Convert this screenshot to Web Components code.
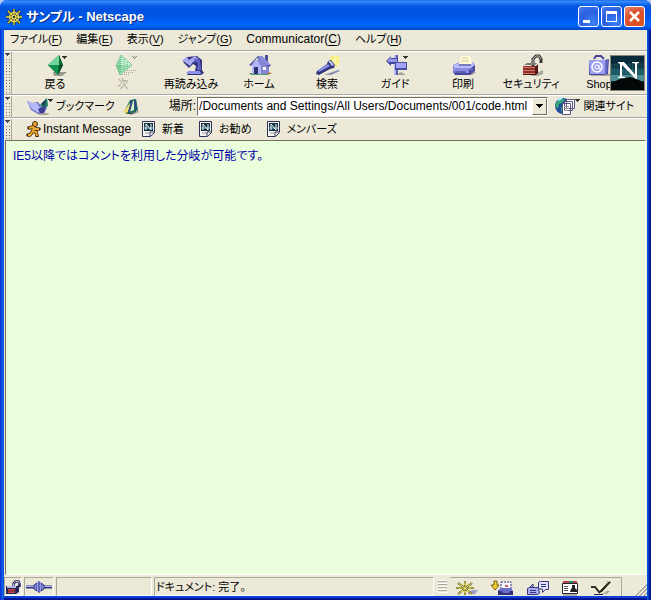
<!DOCTYPE html>
<html lang="ja">
<head>
<meta charset="utf-8">
<title>サンプル - Netscape</title>
<style>
html, body { margin: 0; height: 100%; }
body {
  background: #b4cdf4;
  font: 12px/14px "Liberation Sans", "Noto Sans CJK JP", sans-serif;
  font-feature-settings: "palt";
  color: #000;
  overflow: hidden;
}
</style>
</head>
<body>
<ns-window>
  <ns-title-bar slot="title">サンプル - Netscape</ns-title-bar>
  <ns-menu-bar slot="bars">
    <ns-menu key="F">ファイル</ns-menu>
    <ns-menu key="E">編集</ns-menu>
    <ns-menu key="V">表示</ns-menu>
    <ns-menu key="G">ジャンプ</ns-menu>
    <ns-menu key="C">Communicator</ns-menu>
    <ns-menu key="H">ヘルプ</ns-menu>
  </ns-menu-bar>
  <ns-toolbar slot="bars" kind="navigation">
    <ns-tool icon="back">戻る</ns-tool>
    <ns-tool icon="next" disabled>次</ns-tool>
    <ns-tool icon="reload">再読み込み</ns-tool>
    <ns-tool icon="home">ホーム</ns-tool>
    <ns-tool icon="search">検索</ns-tool>
    <ns-tool icon="guide">ガイド</ns-tool>
    <ns-tool icon="print">印刷</ns-tool>
    <ns-tool icon="security">セキュリティ</ns-tool>
    <ns-tool icon="shop">Shop</ns-tool>
    <ns-icon slot="end" name="netscape"></ns-icon>
  </ns-toolbar>
  <ns-toolbar slot="bars" kind="location">
    <ns-location value="/Documents and Settings/All Users/Documents/001/code.html"></ns-location>
  </ns-toolbar>
  <ns-toolbar slot="bars" kind="personal">
    <ns-link icon="aim">Instant Message</ns-link>
    <ns-link icon="page">新着</ns-link>
    <ns-link icon="page">お勧め</ns-link>
    <ns-link icon="page">メンバーズ</ns-link>
  </ns-toolbar>
  <ns-page>IE5以降ではコメントを利用した分岐が可能です。</ns-page>
  <ns-status-bar slot="status">ドキュメント: 完了。</ns-status-bar>
</ns-window>

<script>
const define = (name, markup, setup) => {
  const template = document.createElement('template');
  template.innerHTML = markup;
  customElements.define(name, class extends HTMLElement {
    constructor() {
      super();
      this.attachShadow({ mode: 'open' }).append(template.content.cloneNode(true));
    }
    connectedCallback() { if (setup) setup(this, this.shadowRoot); }
  });
};

const makeIcon = (name) => {
  const icon = document.createElement('ns-icon');
  icon.setAttribute('name', name);
  return icon;
};

const drop = (x, y) => `<path d="M${x} ${y}h5v1h-1v1h-1v1h-1v-1h-1v-1h-1z" fill="#333"/>`;

/* name: [width, height, drawing] */
const ICONS = {
  helm: [16, 16, `<g stroke="#26240c" stroke-width="3"><path d="M8 0v16M0 8h16M2 2l12 12M14 2L2 14"/></g>
    <g stroke="#e9dc5c" stroke-width="1.3" fill="none"><path d="M8 0v16M0 8h16M2 2l12 12M14 2L2 14"/><circle cx="8" cy="8" r="4.5"/></g><path d="M7 7h2v2H7z" fill="#333"/>`],
  back: [32, 24, `<path d="M14 19h14l-5 4h-8z" fill="#9a978d"/><path d="M9 12L20 2l4 10-5 10z" fill="#087238"/><path d="M9 12L20 2v10z" fill="#6fd59a"/><path d="M9 12h11l-1 10z" fill="#12914d"/><path d="M20 2l4 10h-4z" fill="#0a6b35"/><path d="M20 12h4l-5 10z" fill="#044d28"/>${drop(23, 3)}`],
  next: [32, 24, `<path d="M13 21.500h10M17 19.500h10M20 17.500h9" stroke="#aaa79d" stroke-dasharray="1 1" fill="none"/><path d="M14 2l11 10-12 10-4-10z" fill="#9fe0b5"/><path d="M14 2l11 10H14z" fill="#c3f3d0"/><path d="M9 12h5l-1 10z" fill="#7fcf9c"/><path d="M14 2l11 10-12 10-4-10zM14 4v16M17 6v11M20 9v6M12 8v8" stroke="#4fae73" stroke-dasharray="1 1" fill="none"/><path d="M25 3.500h5M26 4.500h3M27 5.500h1" stroke="#888" stroke-dasharray="1 1"/>`],
  reload: [32, 24, `<path d="M11 19h18l-5 3H14z" fill="#aaa79d"/><path d="M12 4l10-1 5 4v10l2 3-3 2H12l2-4h6l1-5-3-2-4 4-6-6z" fill="#34337f"/><path d="M7 7l5-3 2 3 6-4 4 3-6 3-3 4z" fill="#a8abf4"/><path d="M20 5l5 2 1 10h-4l1-7-4-2z" fill="#6163c2"/><path d="M13 18h12l1 3H12z" fill="#8f92ea"/>`],
  home: [32, 24, `<path d="M6 20h22l-3 2H8z" fill="#4e9a64"/><path d="M22 2h3v10h-3z" fill="#4c4c9d"/><path d="M9 12l9-9 8 10v8H9z" fill="#8585d6"/><path d="M9 12l5-5 4 6v8H9z" fill="#b1b5fa"/><path d="M6 12l9-9 4 0 9 10-3 1-7-8-4-1-6 8z" fill="#55559f"/><path d="M15 3h4l9 9h-5z" fill="#8b8de2"/><path d="M11 14h4v7h-4z" fill="#303071"/><path d="M20 14h3v3h-3z" fill="#fff"/><path d="M26 19l3 2h-5z" fill="#cc6b39"/>`],
  search: [32, 24, `<path d="M20 3h8v9l-6 2-4-5z" fill="#f6ee7c"/><path d="M18 3l9 9M24 2l-1 12M29 5l-8 5" stroke="#fffcbd"/><path d="M13 22l14-5 2 1-9 4z" fill="#8f8db2"/><path d="M6 18l10-7 1-3 3-1 4 5-1 3-4 1-11 6-3-1z" fill="#34347c"/><path d="M7 17l10-6 2 2-11 6z" fill="#8f93e7"/><path d="M17 8l3 0 3 4-2 1z" fill="#bfc3ff"/>`],
  guide: [32, 24, `<path d="M17 22h10l-5-3z" fill="#a5a29b"/><path d="M15 2h4v20h-4z" fill="#5c5dae"/><path d="M15 2h2v20h-2z" fill="#b3b6fb"/><path d="M7 8l5-5v2h7v6h-7v2z" fill="#4546a0"/><path d="M8 8l4-4v2h6v3h-8z" fill="#9497e8"/><path d="M16 9h12v8H16z" fill="#4a4b9e"/><path d="M17 10h10v5H17z" fill="#a0a4f2"/>${drop(24, 3)}`],
  print: [32, 24, `<path d="M22 19h7l-4 3h-8z" fill="#aaa79d"/><path d="M6 12l7-3h13l2 3v6l-5 4H8l-2-3z" fill="#4848a0"/><path d="M6 12l7-3h13l2 3-5 4H7z" fill="#b8bbfa"/><path d="M6 15h16v5H8l-2-2z" fill="#898ce1"/><path d="M12 11l2-8h9l2 8z" fill="#fffbd5"/><path d="M15 5h6M14 8h8" stroke="#ccc596"/><path d="M12 12h12M8 19h11" stroke="#383882"/><path d="M23 15h3v3h-3z" fill="#6263bd"/>`],
  security: [32, 24, `<path d="M19 21l9-4v4l-5 2h-8z" fill="#aaa79d"/><path d="M18 13V6l3-3h3l2 3v4" fill="none" stroke="#3c3a38" stroke-width="3"/><path d="M18 12V6l3-3h3l2 3" fill="none" stroke="#bbb" /><path d="M8 13h13l2-2v9l-2 2H8z" fill="#501714"/><path d="M8 13h12v8H8z" fill="#8f2f28"/><path d="M8 14.500h12M8 17.500h12M8 20.500h12" stroke="#d0756a"/><path d="M9 12l3-2h10l-2 2z" fill="#777"/>`],
  shop: [32, 24, `<path d="M8 22h19l2-3" stroke="#aaa79d" stroke-width="2" fill="none"/><path d="M11 6l2-3h5l3 3" fill="none" stroke="#4545a1" stroke-width="2"/><path d="M6 7h17l3-1-1 15-4 1H6z" fill="#4c4ca5"/><path d="M6 7h16v14H7z" fill="#9ca0f1"/><path d="M22 7l3-1-1 14-2 1z" fill="#6668c2"/><circle cx="14" cy="14" r="5" fill="none" stroke="#fff" stroke-width="1.5"/><circle cx="14" cy="14" r="2" fill="none" stroke="#fff"/><path d="M16 12v4h2" fill="none" stroke="#fff"/>`],
  netscape: [35, 36, `<path d="M0 0h35v36H0z" fill="#86847b"/><path d="M1 1h33v34H1z" fill="#092b39"/><path d="M1 8h33v6H1z" fill="#0e3a48"/><path d="M1 14h33v6H1z" fill="#1c5a66"/><path d="M1 20h33v6H1z" fill="#4c8f92"/><path d="M1 10h33M1 16h33M1 13h33" stroke="#2d7076" stroke-dasharray="1 2"/><path d="M1 28l9-4 10-2 9 3 5 3v7H1z" fill="#020708"/><path d="M8 7h6l11 12.500V8.500L22 8V7h7v1l-2 .5V24h-1L12 10v11.500l3 .5v1H8v-1l2-.5V9L8 8z" fill="#fff"/>`],
  bookmark: [28, 20, `<path d="M11 17h13l-3 2h-8z" fill="#aaa79d"/><path d="M1 5l5 2 6-1 3 4 4-2 2 4-3 5-6 1-7-4z" fill="#7377c6"/><path d="M1 5l5 2 5 0 3 5-1 5-7-4z" fill="#b5b9fb"/><path d="M14 9l7-7 1 8-4 2z" fill="#158263"/><path d="M15 8l5-5-1 7z" fill="#28375e"/><path d="M12 13l8-3-2 7h-4z" fill="#383d8e"/>${drop(22, 3)}`],
  quickfile: [16, 18, `<path d="M9 16l6-3 1 2-4 2z" fill="#aaa79d"/><path d="M1 15L7 3l6-1 2 11-8 4z" fill="#16735a"/><path d="M6 15l3-11 2 0 0 9z" fill="#e4f0c1"/><path d="M0 15l7-9 1 1-4 10z" fill="#edde71"/><path d="M9 4l-3 11M12 3l1 10" stroke="#2f4a85" stroke-width="2"/><path d="M3 16l6 1 4-3" fill="none" stroke="#333"/>`],
  related: [26, 20, `<circle cx="9" cy="10" r="8" fill="#204e9a"/><path d="M3 5l4-3 4 1-3 4-3 1-1 5-3-3zM7 11l4 1-1 5-3-2z" fill="#34a47c"/><path d="M4 4l4-2" stroke="#a7e9ff" stroke-width="2"/><g stroke="#555580"><path d="M12.500 3.500h8v9h-8zM10.500 5.500h8v9h-8zM8.500 7.500h8v11h-8z" fill="#fff"/></g><path d="M10 10.500h5M10 12.500h5M10 14.500h4" stroke="#999"/>${drop(21, 3)}`],
  aim: [16, 16, `<g fill="none" stroke="#3b270d" stroke-linecap="round" stroke-linejoin="round"><path d="M8 6L7 10l3 1 1 4M7 10l-3 4H2M3 7l4-1 3 2h3" stroke-width="3.500"/></g><circle cx="9" cy="3" r="2.500" fill="#f0a928" stroke="#3b270d"/><path d="M8 6L7 10l3 1 1 4M7 10l-3 4H2M3 7l4-1 3 2h3" fill="none" stroke="#f0a928" stroke-width="2"/>`],
  page: [14, 16, `<path d="M.5.5h12v11l-4 4h-8z" fill="#f5f5f5" stroke="#303057"/><path d="M12 11H8v4" fill="none" stroke="#303057"/><path d="M2 2h9v8H2z" fill="#15333f"/><path d="M2 6h9v2H2z" fill="#457c91"/><path d="M4 9V3l5 6V3" fill="none" stroke="#fff"/><path d="M3 12h4" stroke="#999"/>`],
  lock: [16, 16, `<path d="M8.500 8V4.500l2-2h3l1 2V8" fill="none" stroke="#282859" stroke-width="2.500"/><path d="M8.500 7V4.500l2-2h3l1 2" fill="none" stroke="#b9bbea"/><path d="M1 7h11l2-1v7l-3 2H1z" fill="#25255d"/><path d="M2 7h9v2H2z" fill="#b8b8dc"/><path d="M3 10h7v4H3z" fill="#c34a48"/><path d="M3 12h7" stroke="#6c1d27"/>`],
  plug: [28, 14, `<path d="M1 7h9M18 7h9" stroke="#32327c" stroke-width="3"/><path d="M1 6.500h9M18 6.500h9" stroke="#b0b6f8"/><path d="M9 5l3-2v8l-3-2zM16 3l3 2v4l-3 2z" fill="#8a91e4" stroke="#30307a"/><path d="M12 2h4v10h-4z" fill="#9aa0f1"/><path d="M14 1v12" stroke="#30307a"/>`],
  wheel: [24, 16, `<path d="M12 14h8l3-4h-6z" fill="#9da0ca"/><g stroke="#45421c" stroke-width="2"><path d="M10 1v14M1 8h18M3 3l14 11M17 3L3 14"/></g><g stroke="#eee36a" fill="none"><path d="M10 1v14M1 8h18M3 3l14 11M17 3L3 14"/><ellipse cx="10" cy="8" rx="5" ry="4"/></g>`],
  inbox: [24, 16, `<path d="M4 1h3v4h2l-4 5-4-5h3z" fill="#f5d02f" stroke="#765f0f"/><path d="M11 2h10v10H11z" fill="#f8f7ff" stroke="#35356f" stroke-dasharray="2 1"/><path d="M15 5h3v2h-3z" fill="#c96464"/><path d="M8 10l4-2h9l2 3v4H8z" fill="#6a6fca"/><path d="M8 11h4l1 2h6l1-2h3v4H8z" fill="#32327c"/>`],
  chat: [24, 16, `<path d="M12.500 2.500l2-1h8v8h-3l-3 3V9h-4z" fill="#e0e2ff" stroke="#36367c"/><path d="M15 4.500h5M15 6.500h5" stroke="#36367c"/><path d="M1.500 8.500l2-1h9l1 6-2 1h-10zM4 7l3-3v4" fill="#a8acf1" stroke="#36367c"/><path d="M4 10.500h6M4 12.500h6" stroke="#36367c"/>`],
  contact: [18, 16, `<path d="M2 1h14v3H2z" fill="#bb4444"/><path d="M8 1h4v2H8z" fill="#238963"/><path d="M1.500 3.500h15v10h-15z" fill="#fff" stroke="#242431" stroke-width="1"/><path d="M3 6.500h4M3 8.500h4M3 10.500h4" stroke="#555"/><path d="M9 12l1-3 1-1V5h3v3l2 2v2z" fill="#222"/><path d="M2 15h14" stroke="#76746d"/>`],
  composer: [22, 16, `<path d="M7 14h10l3-3h-5z" fill="#aaa79d"/><path d="M2 7l10 0 4 5-8 3z" fill="#f9f8d6"/><path d="M1 7l4 0 5 6" fill="none" stroke="#333" stroke-width="2"/><path d="M8 13L18 1l3 1-9 10z" fill="#23231f"/><path d="M11 9l8-8" stroke="#e8e2b0" stroke-width="1"/><path d="M4 14.500h9" stroke="#272767"/>`],
  minimize: [19, 19, `<path d="M4 13h7v3H4z" fill="#fff"/>`],
  maximize: [19, 19, `<path d="M4 4h11v11H4zM5 7v7h9V7z" fill="#fff" fill-rule="evenodd"/>`],
  close: [19, 19, `<path d="M5 5l9 9M14 5l-9 9" stroke="#fff" stroke-width="2.500"/>`],
  resize: [14, 14, `<path d="M2 14L14 2M6 14l8-8M10 14l4-4" stroke="#aaa798" stroke-width="2"/><path d="M1 14L14 1M5 14l9-9M9 14l5-5" stroke="#fff"/>`],
  arrow: [7, 4, `<path d="M0 0h7v1H6v1H5v1H4v1H3V3H2V2H1V1H0z" fill="#000"/>`]
};

define('ns-icon', `<style>:host{display:block;flex:none}svg{display:block}</style><svg aria-hidden="true"></svg>`, (host, root) => {
  const [w, h, art] = ICONS[host.getAttribute('name')];
  const svg = root.querySelector('svg');
  svg.setAttribute('viewBox', `0 0 ${w} ${h}`);
  svg.setAttribute('width', w);
  svg.setAttribute('height', h);
  svg.innerHTML = art;
});

define('ns-window', `<style>
  :host{display:flex;flex-direction:column;box-sizing:border-box;height:100vh;padding:0 4px 4px;border-radius:7px 7px 0 0;overflow:hidden;
    background:linear-gradient(90deg,#0831d9 0 1px,#166aee 2px,#0855dd 3px,#0855dd calc(100% - 4px),#0855dd calc(100% - 3px),#001ea0 calc(100% - 2px),#00138c)}
  .title{margin:0 -4px}
  main{flex:1;min-height:0;display:flex;background:#ece9d8}
  .foot{box-shadow:0 2px #0b41d8,0 4px #00138c}
</style><div class="title"><slot name="title"></slot></div><slot name="bars"></slot><main><slot></slot></main><div class="foot"><slot name="status"></slot></div>`);

define('ns-title-bar', `<style>
  :host{display:flex;align-items:center;height:30px;padding:3px 6px 0 6px;box-sizing:border-box;gap:4px;color:#fff;
    background:linear-gradient(#0e58d8 0,#3b91ff 1px,#2478f5 3px,#0459e4 6px,#0052df 10px,#0058ea 18px,#0066ff 24px,#0061f8 27px,#0040bf 30px)}
  h1{flex:1;margin:0;font-size:13px;line-height:16px;font-weight:700;text-shadow:1px 1px #0a2a80}
  .buttons{display:flex;gap:2px}
  button{padding:0;width:21px;height:21px;border:1px solid #fff;border-radius:3px;overflow:hidden;background:radial-gradient(circle at 70% 80%,#3b83f4,#2a5fe0 55%,#4a7eee)}
  button.close{background:radial-gradient(circle at 70% 80%,#e0531f,#d9512f 55%,#ee9277)}
</style><ns-icon name="helm"></ns-icon><h1><slot></slot></h1><div class="buttons">
<button aria-label="最小化"><ns-icon name="minimize"></ns-icon></button><button aria-label="最大化"><ns-icon name="maximize"></ns-icon></button><button class="close" aria-label="閉じる"><ns-icon name="close"></ns-icon></button></div>`);

define('ns-menu-bar', `<style>:host{display:flex;align-items:center;gap:14px;height:20px;padding:0 6px;box-sizing:border-box;padding-bottom:2px;background:#ece9d8}</style><slot></slot>`);

define('ns-menu', `<style>:host{display:block}button{font:inherit;font-size:11px;font-feature-settings:inherit;color:inherit;border:0;background:none;padding:0;white-space:nowrap}:host([key=C]) button{font-size:12px}u{text-underline-offset:2px}</style><button><slot></slot>(<u></u>)</button>`, (host, root) => {
  root.querySelector('u').textContent = host.getAttribute('key');
});

define('ns-toolbar', `<style>
  :host{display:flex;background:#ece9d8;border-top:1px solid #aca899;box-shadow:inset 0 1px #fff;overflow:hidden}
  .grip{flex:none;width:8px;border:0;border-right:1px solid #aca899;padding:0;margin-top:1px;
    background:repeating-linear-gradient(#ece9d8 0 2px,transparent 2px 3px) 0 2px,repeating-linear-gradient(90deg,#ece9d8 0 2px,#77746a 2px 3px);display:flex;align-items:flex-start}
  .grip::before{content:"";width:7px;height:6px;background:linear-gradient(#445 0 0) 1px 1px/5px 1px no-repeat,linear-gradient(#445 0 0) 2px 2px/3px 1px no-repeat,linear-gradient(#445 0 0) 3px 3px/1px 1px no-repeat,#ece9d8}
  .items{flex:1;min-width:0;display:flex;overflow:hidden;align-items:center}
  :host([kind=navigation]){height:43px}
  :host([kind=navigation]) .items{padding-left:9px;align-items:flex-start}
  :host([kind=location]){height:22px}
  :host([kind=personal]){height:22px}
  :host([kind=personal]) .items{padding-left:14px;gap:15px;font-size:11px}
  .end{flex:none;display:flex;align-items:center;padding-right:2px}
  :host(:not([kind=navigation])) .end{display:none}
</style><button class="grip" aria-label="ツールバーを折りたたむ"></button><div class="items"><slot></slot></div><div class="end"><slot name="end"></slot></div>`);

define('ns-tool', `<style>
  :host{display:block;flex:0 0 68px}
  button{font:inherit;font-size:11px;font-feature-settings:inherit;color:inherit;width:100%;border:0;background:none;padding:2px 0 0;display:flex;flex-direction:column;align-items:center;white-space:nowrap}
  button:disabled{color:#aca899}
</style><button><span><slot></slot></span></button>`, (host, root) => {
  const button = root.querySelector('button');
  button.prepend(makeIcon(host.getAttribute('icon')));
  button.disabled = host.hasAttribute('disabled');
});

define('ns-link', `<style>
  :host{display:block;font-size:11px}
  a{display:flex;align-items:center;gap:6px;color:inherit;text-decoration:none;white-space:nowrap}
  :host([icon=aim]) a{gap:1px}
  :host([icon=aim]){font-size:12px;margin-right:-4px}
</style><a href="#"><span><slot></slot></span></a>`, (host, root) => {
  root.querySelector('a').prepend(makeIcon(host.getAttribute('icon')));
});

define('ns-location', `<style>
  :host{flex:1;min-width:0;display:flex;align-items:center;padding:0 13px 0 14px;white-space:nowrap}
  button{font:inherit;font-feature-settings:inherit;color:inherit;border:0;background:none;padding:0;display:flex;align-items:center;flex:none}
  .mark{font-size:11px;gap:2px}
  .quick{margin:0 30px 0 8px}
  .combo{flex:1;min-width:0;display:flex;height:19px;box-sizing:border-box;margin:0 6px 0 1px;border:1px solid;border-color:#716f64 #fff #fff #716f64;background:#fff}
  input{flex:1;min-width:0;border:0;outline:0;padding:0 0 0 1px;font:inherit;background:#fff;color:#000}
  .combo button{width:15px;box-sizing:border-box;justify-content:center;background:#ece9d8;border:1px solid;border-color:#fff #716f64 #716f64 #fff}
  .related{gap:3px;font-size:11px}
</style><button class="mark"><ns-icon name="bookmark"></ns-icon>ブックマーク</button>
<button class="quick" aria-label="クイックファイル"><ns-icon name="quickfile"></ns-icon></button>
<label for="url">場所:</label><div class="combo"><input id="url" type="text"><button aria-label="履歴"><ns-icon name="arrow"></ns-icon></button></div>
<button class="related"><ns-icon name="related"></ns-icon>関連サイト</button>`, (host, root) => {
  root.querySelector('input').value = host.getAttribute('value');
});

define('ns-page', `<style>
  :host{flex:1;display:block;box-sizing:border-box;background:#ebffdd;color:#0000a8;padding:8px 7px;border:1px solid;border-color:#716f64 #fff #fff #716f64;margin:0 1px 2px}
  p{margin:0}
</style><p><slot></slot></p>`);

define('ns-status-bar', `<style>
  :host{display:flex;height:19px;gap:2px;background:#ece9d8;white-space:nowrap;overflow:hidden}
  .cell{box-sizing:border-box;display:flex;align-items:center;border:1px solid;border-color:#aca899 #fff #fff #aca899}
  .lock{width:18px}.plug{width:30px;justify-content:center}.progress{width:96px}
  progress{appearance:none;width:100%;height:100%;background:none;border:0}
  progress::-webkit-progress-bar{background:none}
  .text{flex:1;padding-left:1px;font-size:11px}
  button{border:0;background:none;padding:0;display:flex}
  .grip{width:12px;flex:none;margin:3px 0;background:repeating-linear-gradient(#fff 0 1px,#aca899 1px 2px,#ece9d8 2px 3px) 2px 0/9px 100% no-repeat}
  .components{box-sizing:border-box;width:172px;display:flex;align-items:center;justify-content:space-between;padding:2px 9px 0 5px;border-top:1px solid #aca899;border-right:1px solid #aca899}
  .size{width:23px;display:flex;align-items:flex-end;justify-content:flex-end}
</style>
<div class="cell lock"><button aria-label="セキュリティ情報"><ns-icon name="lock"></ns-icon></button></div>
<div class="cell plug"><button aria-label="オンライン"><ns-icon name="plug"></ns-icon></button></div>
<div class="cell progress"><progress value="0" max="100" aria-label="進行状況"></progress></div>
<div class="cell text"><slot></slot></div>
<div class="grip"></div>
<div class="components">
<button aria-label="ナビゲーター"><ns-icon name="wheel"></ns-icon></button><button aria-label="受信箱"><ns-icon name="inbox"></ns-icon></button><button aria-label="ニュースグループ"><ns-icon name="chat"></ns-icon></button><button aria-label="アドレス帳"><ns-icon name="contact"></ns-icon></button><button aria-label="コンポーザー"><ns-icon name="composer"></ns-icon></button></div>
<div class="size"><ns-icon name="resize"></ns-icon></div>`);
</script>
</body>
</html>
